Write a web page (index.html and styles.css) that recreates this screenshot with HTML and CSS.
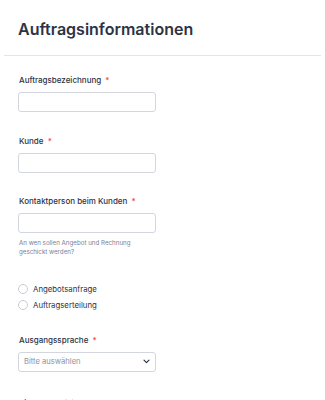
FILE: index.html
```html
<!DOCTYPE html>
<html lang="de">
<head>
<meta charset="utf-8">
<link rel="stylesheet" href="styles.css">
</head>
<body>
<div class="form">
  <header class="head">
    <h1 class="title">Auftragsinformationen</h1>
  </header>
  <div class="fields">
    <div class="field">
      <label class="label">Auftragsbezeichnung <span class="req">*</span></label>
      <div class="input"></div>
    </div>
    <div class="field">
      <label class="label">Kunde <span class="req">*</span></label>
      <div class="input"></div>
    </div>
    <div class="field">
      <label class="label">Kontaktperson beim Kunden <span class="req">*</span></label>
      <div class="input"></div>
      <p class="help">An wen sollen Angebot und Rechnung<br>geschickt werden?</p>
    </div>
    <div class="field radios">
      <div class="radio"><span class="circle"></span><span>Angebotsanfrage</span></div>
      <div class="radio"><span class="circle"></span><span>Auftragserteilung</span></div>
    </div>
    <div class="field">
      <label class="label">Ausgangssprache <span class="req">*</span></label>
      <div class="input select">
        <span class="placeholder">Bitte auswählen</span>
        <svg class="chev" width="7" height="5" viewBox="0 0 7 5"><path d="M1 1.2l2.5 2.5 2.5-2.5" fill="none" stroke="#2c3345" stroke-width="1.2" stroke-linecap="round" stroke-linejoin="round"/></svg>
      </div>
    </div>
    <div class="field last">
      <label class="label">Zielsprache(n) <span class="req">*</span></label>
    </div>
  </div>
</div>
</body>
</html>
```
FILE: styles.css
```css
* { box-sizing: border-box; }
html, body { margin: 0; padding: 0; background: #fff; }
body { font-family: Inter, "Noto Sans", sans-serif; color: #2c3345; overflow: hidden; height: 400px; }
.form { padding: 0 4px; }
.head { padding: 19px 14px 16px; border-bottom: 1px solid #e3e5ea; }
.title { margin: 0; font-size: 16px; font-weight: 600; line-height: 20px; color: #2c3345; }
.fields { padding: 19px 14px 0; display: flex; flex-direction: column; }
.field { display: flex; flex-direction: column; margin-bottom: 23.5px; }
.label { display: block; font-size: 8px; font-weight: 500; line-height: 10px; margin: 0 0 7px 1px; color: #2c3345; }
.req { color: #f23a3c; margin-left: 2px; }
.input { width: 138px; height: 20px; border: 1px solid #d3d6de; border-radius: 3px; background: #fff; }
.help { margin: 4.5px 0 0 1px; font-size: 6.2px; line-height: 9px; color: #7b8092; }
.radios { margin-top: 4.5px; gap: 6px; margin-bottom: 25px; }
.radio { display: flex; align-items: center; gap: 5px; font-size: 7.8px; line-height: 10px; }
.circle { flex: none; width: 10px; height: 10px; border: 1px solid #c8cbd2; border-radius: 50%; }
.select { display: flex; align-items: center; justify-content: space-between; padding: 0 5px 0 5px; }
.placeholder { font-size: 7.6px; color: #8d91a3; }
.chev { display: block; }
.last { margin-top: 3px; margin-bottom: 0; }
```
